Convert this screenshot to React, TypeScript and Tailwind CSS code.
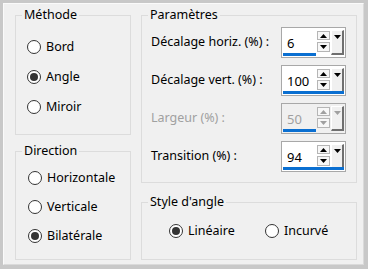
import React from 'react'

const font = { fontFamily: '"Noto Sans", "Open Sans", sans-serif' }

function Radio({ label, checked }: { label: string; checked?: boolean }) {
  return (
    <div className="flex items-center h-[16px] gap-[5px]">
      <span className="w-[14px] h-[14px] rounded-full border border-[#333333] bg-white flex items-center justify-center shrink-0">
        {checked && <span className="w-[8px] h-[8px] rounded-full bg-[#333333]" />}
      </span>
      <span className="text-[12.5px] leading-[16px] text-black">{label}</span>
    </div>
  )
}

function Arrow({ dir, color }: { dir: 'up' | 'down'; color: string }) {
  return (
    <svg width="7" height="4" viewBox="0 0 7 4">
      {dir === 'up' ? <path d="M3.5 0L7 4H0z" fill={color} /> : <path d="M0 0h7L3.5 4z" fill={color} />}
    </svg>
  )
}

function Spin({ value, full, disabled }: { value: string; full?: boolean; disabled?: boolean }) {
  const arrow = disabled ? '#a0a0a0' : '#000000'
  return (
    <div className={`relative w-[65px] h-[31px] border border-[#a8a8a8] flex ${disabled ? 'bg-[#f0f0f0]' : 'bg-white'}`}>
      <div className={`w-[35px] pl-[5px] pt-[6px] text-[13px] leading-[18px] ${disabled ? 'text-[#a0a0a0]' : 'text-black'}`}>{value}</div>
      <div className="flex flex-col pt-[3px] gap-[2px]">
        <div className="w-[13px] h-[9px] border border-[#b5b5b5] bg-[#f7f7f7] flex items-center justify-center">
          <Arrow dir="up" color={arrow} />
        </div>
        <div className="w-[13px] h-[10px] border border-[#b5b5b5] bg-[#f7f7f7] flex items-center justify-center">
          <Arrow dir="down" color={arrow} />
        </div>
      </div>
      <div className="ml-[1px] mt-[2px] w-[13px] h-[25px] bg-[#f0f0f0] border-t border-l border-t-white border-l-white border-r-2 border-b-2 border-r-[#6f6f6f] border-b-[#6f6f6f] flex justify-center pt-[4px]">
        <Arrow dir="down" color={arrow} />
      </div>
      <div className={`absolute left-[1px] bottom-[1px] h-[3px] bg-[#0a6fd1] ${full ? 'w-[61px]' : 'w-[33px]'}`} />
    </div>
  )
}

function Row({ label, value, full, disabled }: { label: string; value: string; full?: boolean; disabled?: boolean }) {
  return (
    <div className="flex items-center justify-between h-[31px]">
      <span className={`text-[12.5px] leading-[16px] -mt-[2px] ${disabled ? 'text-[#a0a0a0]' : 'text-black'}`}>{label}</span>
      <Spin value={value} full={full} disabled={disabled} />
    </div>
  )
}

function Group({ title, className, children }: { title: string; className: string; children: React.ReactNode }) {
  return (
    <fieldset className={`border border-[#dcdcdc] ${className}`}>
      <legend className="ml-[6px] px-[2px] text-[12.5px] leading-[16px] text-black">{title}</legend>
      {children}
    </fieldset>
  )
}

export default function App() {
  return (
    <div className="w-[368px] h-[269px] bg-[#c8c8c8] pt-[3px] pl-[3px] pr-[4px] pb-[4px]" style={font}>
      <div className="w-full h-full bg-[#f0f0f0] border border-t-[#fafafa] border-l-[#fafafa] border-r-[#dadada] border-b-[#dadada] pl-[11px] pt-[3px] flex gap-[10px]">
        <div className="w-[116px] flex flex-col gap-[8px]">
          <Group title="Méthode" className="h-[128px]">
            <div className="flex flex-col gap-[14px] pl-[11px] pt-[16px]">
              <Radio label="Bord" />
              <Radio label="Angle" checked />
              <Radio label="Miroir" />
            </div>
          </Group>
          <Group title="Direction" className="h-[117px]">
            <div className="flex flex-col gap-[13px] pl-[12px] pt-[11px]">
              <Radio label="Horizontale" />
              <Radio label="Verticale" />
              <Radio label="Bilatérale" checked />
            </div>
          </Group>
        </div>
        <div className="w-[216px] flex flex-col gap-[11px]">
          <Group title="Paramètres" className="h-[176px]">
            <div className="flex flex-col gap-[7px] pl-[9px] pr-[10px] pt-[4px]">
              <Row label="Décalage horiz. (%) :" value="6" />
              <Row label="Décalage vert. (%) :" value="100" full />
              <Row label="Largeur (%) :" value="50" disabled />
              <Row label="Transition (%) :" value="94" full />
            </div>
          </Group>
          <Group title="Style d'angle" className="h-[66px]">
            <div className="flex pl-[27px] pt-[13px]">
              <div className="w-[96px]">
                <Radio label="Linéaire" checked />
              </div>
              <Radio label="Incurvé" />
            </div>
          </Group>
        </div>
      </div>
    </div>
  )
}
